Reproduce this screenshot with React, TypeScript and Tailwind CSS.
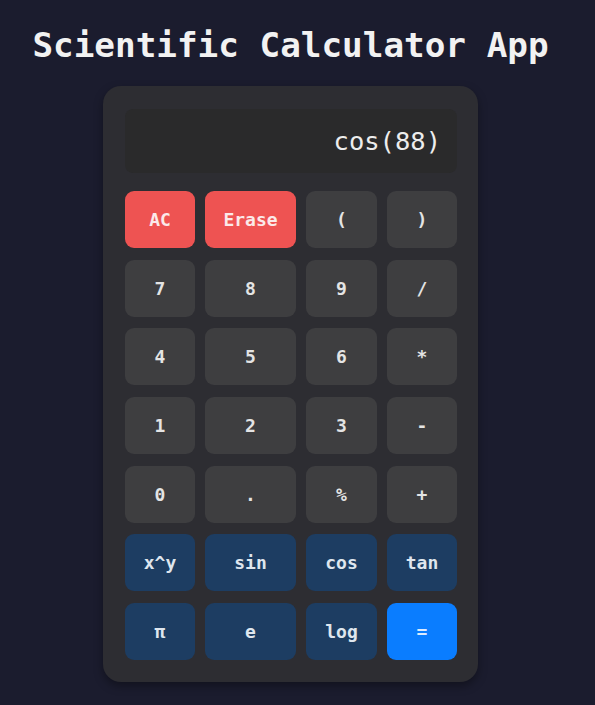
import React from "react";

type Btn = { label: string; kind: "gray" | "red" | "blue" | "eq" };

const rows: Btn[][] = [
  [
    { label: "AC", kind: "red" },
    { label: "Erase", kind: "red" },
    { label: "(", kind: "gray" },
    { label: ")", kind: "gray" },
  ],
  [
    { label: "7", kind: "gray" },
    { label: "8", kind: "gray" },
    { label: "9", kind: "gray" },
    { label: "/", kind: "gray" },
  ],
  [
    { label: "4", kind: "gray" },
    { label: "5", kind: "gray" },
    { label: "6", kind: "gray" },
    { label: "*", kind: "gray" },
  ],
  [
    { label: "1", kind: "gray" },
    { label: "2", kind: "gray" },
    { label: "3", kind: "gray" },
    { label: "-", kind: "gray" },
  ],
  [
    { label: "0", kind: "gray" },
    { label: ".", kind: "gray" },
    { label: "%", kind: "gray" },
    { label: "+", kind: "gray" },
  ],
  [
    { label: "x^y", kind: "blue" },
    { label: "sin", kind: "blue" },
    { label: "cos", kind: "blue" },
    { label: "tan", kind: "blue" },
  ],
  [
    { label: "π", kind: "blue" },
    { label: "e", kind: "blue" },
    { label: "log", kind: "blue" },
    { label: "=", kind: "eq" },
  ],
];

const kindClass: Record<Btn["kind"], string> = {
  gray: "bg-[#3e3e40] text-[#e4e4e4]",
  red: "bg-[#ee5352] text-[#fbe9e9]",
  blue: "bg-[#1d3d62] text-[#dfe6ee]",
  eq: "bg-[#0a7dff] text-[#dcebff]",
};

export default function App() {
  return (
    <div
      className="min-h-[705px] w-full bg-[#1b1c2e] flex flex-col items-center pr-[14px]"
      style={{ fontFamily: '"DejaVu Sans Mono", "Liberation Mono", monospace' }}
    >
      <h1 className="mt-[23px] text-[34.3px] leading-[44px] font-bold text-[#f2f2f2]">
        Scientific Calculator App
      </h1>
      <div className="mt-[19px] w-[375px] rounded-[18px] bg-[#2d2d32] pt-[23px] pb-[22px] pl-[22px] pr-[21px] shadow-[0_4px_10px_rgba(0,0,0,0.35)]">
        <div className="h-[64px] rounded-[8px] bg-[#2a2a2b] flex items-center justify-end pr-[16px] text-[25.5px] text-[#ededed]">
          cos(88)
        </div>
        <div className="mt-[18px] grid grid-cols-[70px_91px_71px_70px] gap-x-[10px] gap-y-[11.67px]">
          {rows.flat().map((b, i) => (
            <div
              key={i}
              className={`h-[57px] rounded-[9px] flex items-center justify-center text-[18px] font-bold ${kindClass[b.kind]}`}
            >
              {b.label}
            </div>
          ))}
        </div>
      </div>
    </div>
  );
}
